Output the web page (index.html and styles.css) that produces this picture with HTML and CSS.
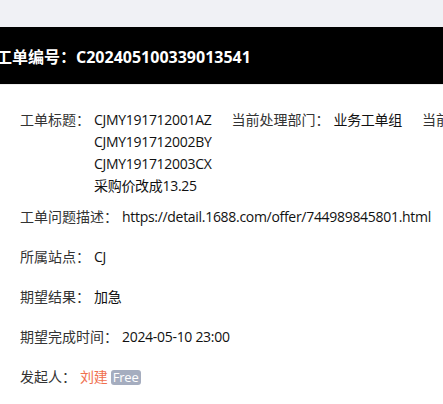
FILE: index.html
```html
<!DOCTYPE html>
<html lang="zh-CN">
<head>
  <meta charset="UTF-8">
  <meta name="viewport" content="width=device-width, initial-scale=1.0">
  <title>工单详情</title>
  <link rel="stylesheet" href="styles.css">
</head>
<body>
  <div class="topbar"></div>
  <div class="order-head">
    <h2>工单编号：C202405100339013541</h2>
  </div>
  <div class="detail">
    <div class="row row-main">
      <div class="field">
        <span class="label">工单标题：</span>
        <div class="value">
          CJMY191712001AZ<br>
          CJMY191712002BY<br>
          CJMY191712003CX<br>
          采购价改成13.25
        </div>
      </div>
      <div class="field">
        <span class="label">当前处理部门：</span>
        <div class="value">业务工单组</div>
      </div>
      <div class="field">
        <span class="label">当前处理人：</span>
        <div class="value">王芳</div>
      </div>
    </div>
    <div class="row">
      <span class="label">工单问题描述：</span>
      <div class="value">https://detail.1688.com/offer/744989845801.html</div>
    </div>
    <div class="row">
      <span class="label">所属站点：</span>
      <div class="value">CJ</div>
    </div>
    <div class="row">
      <span class="label">期望结果：</span>
      <div class="value">加急</div>
    </div>
    <div class="row">
      <span class="label">期望完成时间：</span>
      <div class="value">2024-05-10 23:00</div>
    </div>
    <div class="row">
      <span class="label">发起人：</span>
      <div class="value"><span class="user">刘建</span> <span class="badge">Free</span></div>
    </div>
  </div>
</body>
</html>
```

FILE: styles.css
```css
body {
  font-family: 'Open Sans', 'Noto Sans CJK SC', sans-serif;
  font-size: 14px;
  color: #333333;
  background-color: #ffffff;
  margin: 0;
  padding: 0;
  overflow: hidden;
}

.topbar {
  height: 27px;
  background-color: #f0f1f5;
}

.order-head {
  height: 57px;
  background-color: #000000;
  border-bottom: 1px solid #eeeeee;
  display: flex;
  align-items: center;
}

.order-head h2 {
  margin: 0 0 0 -4px;
  font-size: 16px;
  font-weight: bold;
  color: #ffffff;
  white-space: nowrap;
}

.detail {
  padding: 24px 0 0 20px;
}

.row {
  display: flex;
  min-height: 40px;
  padding-bottom: 9px;
  box-sizing: border-box;
  line-height: 22px;
  white-space: nowrap;
}

.row-main {
  gap: 20px;
}

.field {
  display: flex;
}

.label {
  color: #333333;
  margin-right: 4px;
}

.value {
  color: #111111;
  letter-spacing: -0.3px;
}

.user {
  color: #f0704f;
}

.badge {
  display: inline-block;
  padding: 0 2px;
  line-height: 15px;
  font-size: 13px;
  letter-spacing: -0.2px;
  color: #ffffff;
  background-color: #a5adbf;
  border-radius: 3px;
}
```
